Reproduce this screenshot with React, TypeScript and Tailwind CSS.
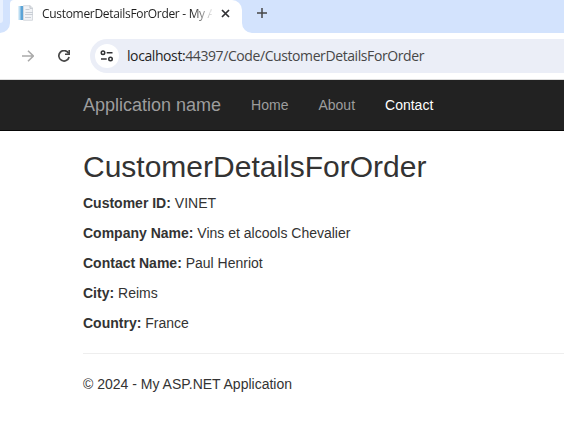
import React from "react";

const segoe = "font-['Open_Sans','Noto_Sans',sans-serif]";

function Favicon() {
  return (
    <svg width="16" height="16" viewBox="0 0 16 16" className="shrink-0">
      <rect x="0.5" y="1" width="5" height="14" fill="#b9dcf2" />
      <rect x="2.5" y="1" width="2.5" height="14" fill="#5ba3d6" />
      <path d="M5.5 .7h6.7l2.3 2.3v12.3h-9z" fill="#f1f3f6" stroke="#cdd2d8" strokeWidth="0.8" />
      <path d="M12 .7V3.3h2.5" fill="none" stroke="#b5bac1" strokeWidth="0.8" />
      <path d="M7.5 4.5h4M7.5 7.5h7.5M7 9.5h8M7 12.5h6" stroke="#c9ced5" strokeWidth="1" />
    </svg>
  );
}

function TabStrip() {
  return (
    <div className="relative flex h-[33px] bg-[#d3e3fd]">
      <div className="h-[23px] w-[3px] rounded-br-lg bg-[#e9f1fe]" />
      <svg className="absolute left-0 top-[23px]" width="10" height="10">
        <path d="M10 0v10H0A10 10 0 0 0 10 0z" fill="#fff" />
      </svg>
      <div className="ml-[7px] flex h-[33px] w-[232px] items-start rounded-tl-[4px] rounded-tr-[10px] bg-white pl-2 pt-[5px]">
        <Favicon />
        <div className={`ml-2 h-[18px] w-[170px] whitespace-nowrap text-[12px] leading-[18px] text-[#1f1f1f] ${segoe} [mask-image:linear-gradient(to_right,#000_150px,transparent_172px)]`}>
          <span className="tracking-[-0.31px]">CustomerDetailsForOrder - My A</span>
        </div>
        <svg className="ml-[9px] mt-[4px]" width="9" height="9" viewBox="0 0 9 9">
          <path d="M1 1l7 7M8 1l-7 7" stroke="#303134" strokeWidth="1.7" />
        </svg>
      </div>
      <svg className="absolute left-[242px] top-[23px]" width="10" height="10">
        <path d="M0 0v10h10A10 10 0 0 1 0 0z" fill="#fff" />
      </svg>
      <svg className="ml-[15px] mt-[8px]" width="10" height="10" viewBox="0 0 10 10">
        <path d="M5 0v10M0 5h10" stroke="#474747" strokeWidth="1.5" />
      </svg>
    </div>
  );
}

function Toolbar() {
  return (
    <div className="flex h-[47px] items-start border-b border-[#dcdcdc] bg-white pl-[22px] pt-[6px]">
      <svg className="mt-[11px]" width="12" height="12" viewBox="0 0 12 12">
        <path d="M0 6h11M6 .7L11.3 6 6 11.3" fill="none" stroke="#ababab" strokeWidth="1.6" />
      </svg>
      <svg className="ml-[24px] mt-[11px]" width="12" height="12" viewBox="0 0 12 12">
        <path d="M10.6 3.3A5.2 5.2 0 1 0 11.1 7" fill="none" stroke="#474747" strokeWidth="1.7" />
        <path d="M12 0v5H7V3.5h3.4V0z" fill="#474747" />
      </svg>
      <div className="ml-[20px] flex h-[34px] flex-1 items-center rounded-l-full bg-[#ebeef7] pl-[5px]">
        <div className="flex h-6 w-6 items-center justify-center rounded-full bg-white">
          <svg width="14" height="12" viewBox="0 0 14 12" fill="none" stroke="#303134" strokeWidth="1.5">
            <circle cx="3" cy="2.7" r="1.75" />
            <path d="M6.7 2.7H12.5M1 9.1h5.7" />
            <circle cx="10.5" cy="9.1" r="1.75" />
          </svg>
        </div>
        <div className={`ml-2 whitespace-nowrap text-[14px] leading-5 text-[#474747] ${segoe}`}>
          <span className="tracking-[-0.41px]"><span className="text-[#1f1f1f]">localhost:</span>44397/Code/CustomerDetailsForOrder</span>
        </div>
      </div>
    </div>
  );
}

function Navbar() {
  return (
    <nav className="flex h-[51px] items-center border-b border-[#080808] bg-[#222] pl-[83px] text-[14px] leading-5 text-[#9d9d9d]">
      <a className="text-[18px]">Application name</a>
      <a className="ml-[30px]">Home</a>
      <a className="ml-[30px]">About</a>
      <a className="ml-[30px] text-white">Contact</a>
    </nav>
  );
}

const details = [
  ["Customer ID:", "VINET"],
  ["Company Name:", "Vins et alcools Chevalier"],
  ["Contact Name:", "Paul Henriot"],
  ["City:", "Reims"],
  ["Country:", "France"],
];

export default function App() {
  return (
    <div className="h-[429px] w-[564px] overflow-hidden bg-white font-['Liberation_Sans',Arial,sans-serif]">
      <TabStrip />
      <Toolbar />
      <Navbar />
      <main className="pl-[83px] pt-[19px] text-[14px] leading-5 text-[#333]">
        <h1 className="mb-[10px] text-[30px] leading-[33px]">CustomerDetailsForOrder</h1>
        {details.map(([label, value]) => (
          <p key={label} className="mb-[10px]">
            <strong>{label}</strong> {value}
          </p>
        ))}
        <hr className="mb-5 mt-5 border-[#eee]" />
        <footer>© 2024 - My ASP.NET Application</footer>
      </main>
    </div>
  );
}
